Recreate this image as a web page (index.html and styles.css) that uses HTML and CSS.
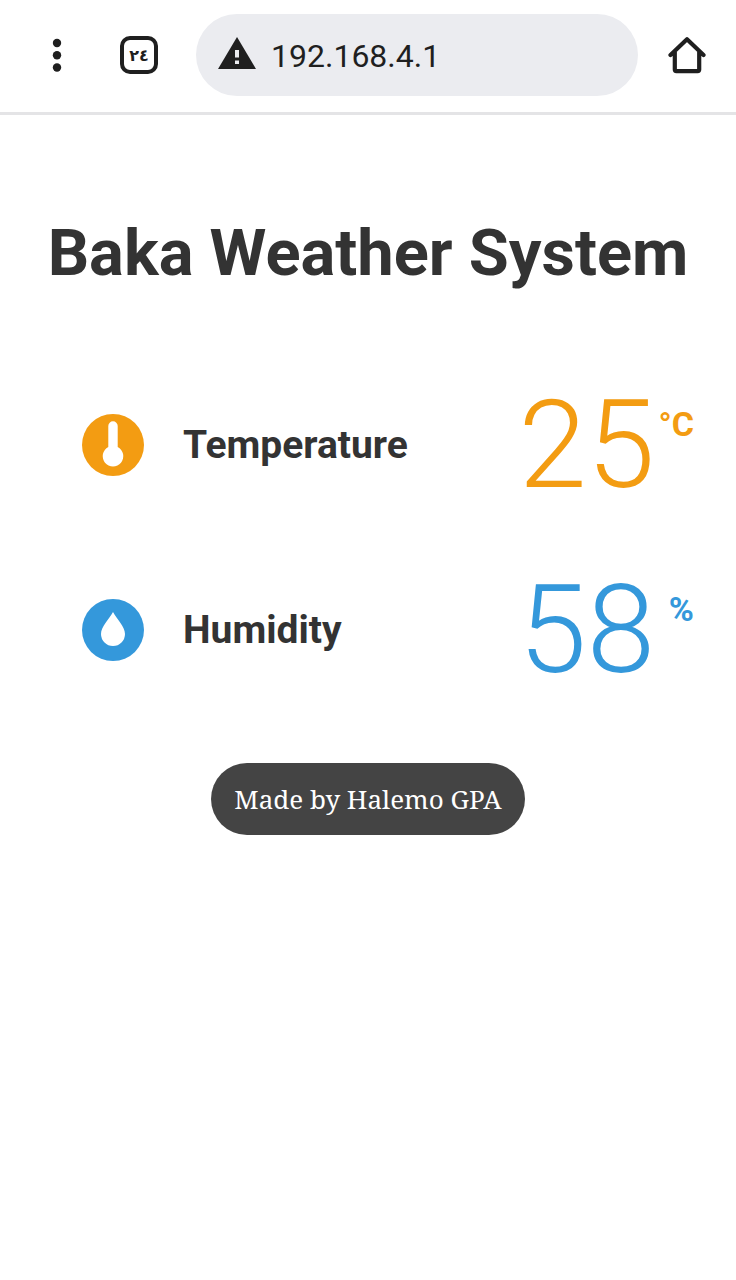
FILE: index.html
```html
<!DOCTYPE html>
<html lang="en">
<head>
<meta charset="utf-8">
<meta name="viewport" content="width=device-width, initial-scale=1">
<title>Baka Weather System</title>
<link rel="stylesheet" href="styles.css">
</head>
<body>
<header class="toolbar">
  <button class="tool" type="button" aria-label="Menu">
    <svg width="38" height="38" viewBox="0 0 38 38"><g fill="#1f1f1f"><circle cx="19" cy="7" r="4.200"/><circle cx="19" cy="19.200" r="4.200"/><circle cx="19" cy="31.500" r="4.200"/></g></svg>
  </button>
  <button class="tool tabs" type="button" aria-label="Open tabs">٢٤</button>
  <div class="address">
    <svg class="warning" width="38" height="36" viewBox="0 0 38 36" aria-hidden="true"><path d="M19 0 38 32H0z" fill="#1f1f1f"/><path d="M17 13h4v7.500h-4zM17 23.500h4v3.500h-4z" fill="#ebecf0"/></svg>
    <input class="url" type="text" value="192.168.4.1" aria-label="Address">
  </div>
  <button class="tool" type="button" aria-label="Home">
    <svg width="38" height="38" viewBox="0 0 38 38"><path d="M2.500 19 19 3.200 35.500 19M6.800 16v17.500q0 1.600 1.600 1.600h21.200q1.600 0 1.600-1.600V16" fill="none" stroke="#1f1f1f" stroke-width="4.200" stroke-linecap="round" stroke-linejoin="round"/></svg>
  </button>
</header>
<main class="page">
  <h1 class="title">Baka Weather System</h1>
  <section class="reading temperature">
    <svg class="icon" width="62" height="62" viewBox="0 0 62 62" aria-hidden="true"><circle cx="31" cy="31" r="31" fill="#f39c12"/><path d="M26.300 12a4.700 4.700 0 0 1 9.400 0v21a10.300 10.300 0 1 1-9.400 0z" fill="#fff"/></svg>
    <h2 class="label">Temperature</h2>
    <p class="value">25</p>
    <span class="unit">°C</span>
  </section>
  <section class="reading humidity">
    <svg class="icon" width="62" height="62" viewBox="0 0 62 62" aria-hidden="true"><circle cx="31" cy="31" r="31" fill="#3498db"/><path d="M31 13C27 20 19 28 19 35a12 12 0 0 0 24 0C43 28 35 20 31 13z" fill="#fff"/></svg>
    <h2 class="label">Humidity</h2>
    <p class="value">58</p>
    <span class="unit">%</span>
  </section>
  <footer class="credit">Made by Halemo GPA</footer>
</main>
</body>
</html>
```
FILE: styles.css
```css
* {
  box-sizing: border-box;
}

body {
  margin: 0;
  background: #fff;
  color: #333;
  font-family: Roboto, sans-serif;
}

.toolbar {
  display: flex;
  align-items: center;
  padding: 14px 30px 16px 38px;
  border-bottom: 3px solid #e4e4e6;
}

.tool {
  display: flex;
  flex: none;
  align-items: center;
  justify-content: center;
  width: 38px;
  height: 38px;
  padding: 0;
  border: 0;
  background: none;
}

.tabs {
  margin-left: 44px;
  border: 4px solid #1f1f1f;
  border-radius: 10px;
  color: #1f1f1f;
  font: bold 16px "DejaVu Sans", sans-serif;
}

.address {
  display: flex;
  flex: 1;
  align-items: center;
  min-width: 0;
  height: 82px;
  margin: 0 30px 0 38px;
  padding: 0 22px;
  border-radius: 41px;
  background: #ebecf0;
}

.warning {
  flex: none;
}

.url {
  flex: 1;
  min-width: 0;
  margin-left: 15px;
  padding: 2px 0 0;
  border: 0;
  outline: 0;
  background: none;
  color: #1f1f1f;
  font: 32px/40px Roboto, sans-serif;
}

.page {
  padding: 99px 42px 40px;
}

.title {
  margin: 0 0 60px;
  font-size: 65px;
  font-weight: 700;
  line-height: 78px;
  text-align: center;
}

.reading {
  display: grid;
  grid-template-columns: 62px 1fr auto 39px;
  align-items: center;
  height: 185px;
  padding-left: 40px;
}

.label {
  margin: 0 0 0 39px;
  color: #333;
  font-size: 39px;
  font-weight: 700;
  line-height: 46px;
}

.value {
  margin: 0;
  font-size: 123px;
  font-weight: 300;
  line-height: 146px;
}

.unit {
  align-self: start;
  justify-self: end;
  margin-top: 52px;
  font-size: 34px;
  font-weight: 700;
  line-height: 40px;
}

.temperature {
  color: #f39c12;
}

.humidity {
  color: #3498db;
}

.credit {
  width: fit-content;
  margin: 41px auto 0;
  padding: 18px 23px;
  border-radius: 36px;
  background: #444;
  color: #fff;
  font: 26px/36px "Noto Serif", "Droid Serif", "DejaVu Serif", serif;
}
```
